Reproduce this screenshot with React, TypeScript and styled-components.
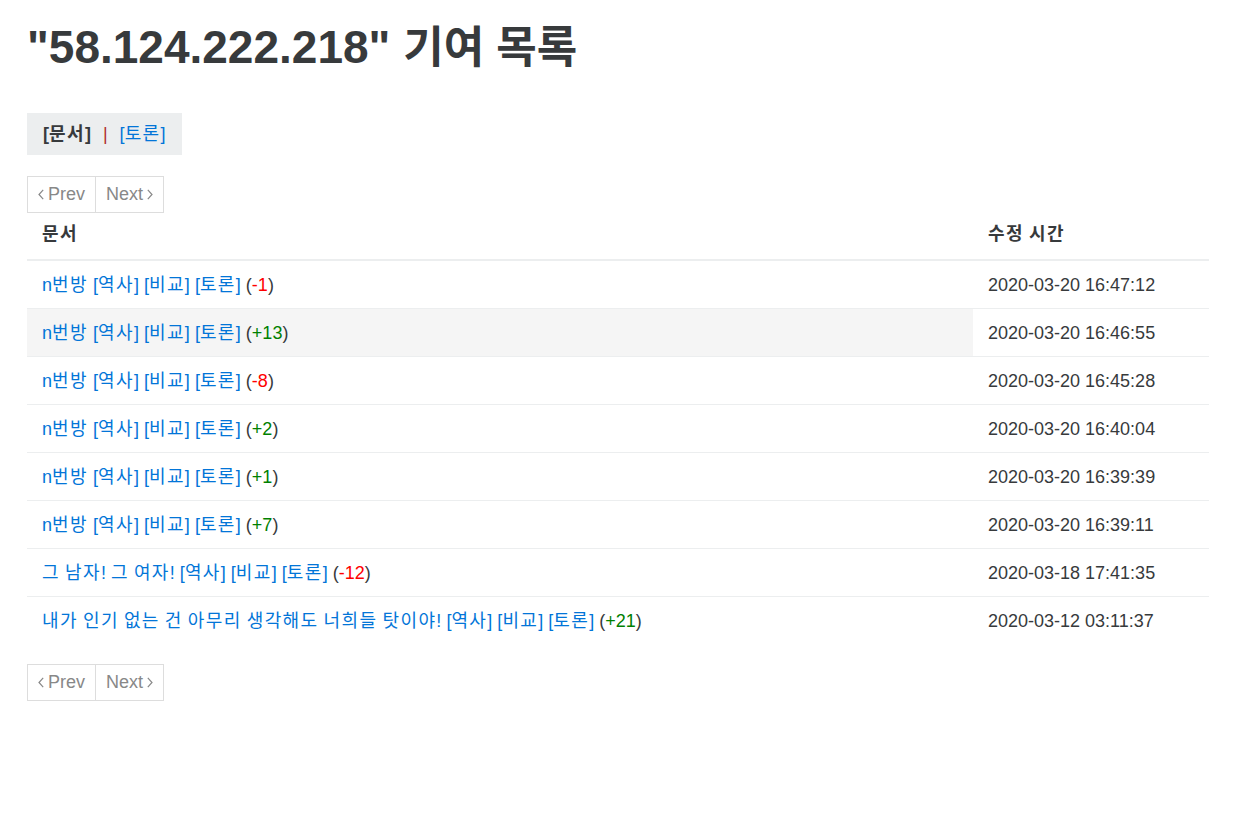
import * as React from 'react';
import styled, { createGlobalStyle } from 'styled-components';

const GlobalStyle = createGlobalStyle`
  body {
    margin: 0;
    background: #fff;
    color: #373a3c;
    font-family: "Liberation Sans", Arial, "Noto Sans CJK KR", sans-serif;
    font-size: 18px;
  }
`;

const Page = styled.div`
  padding: 0 28px 40px 27px;
`;

const Title = styled.h1`
  margin: 17px 0 0;
  font-size: 46px;
  line-height: 60px;
  font-weight: 700;
  color: #373a3c;
`;

const TitleSuffix = styled.span`
  font-size: 44px;
`;

const Hangul = styled.span`
  letter-spacing: 1.4px;
`;

const TabBox = styled.div`
  display: inline-flex;
  align-items: center;
  gap: 12px;
  height: 42px;
  margin-top: 35px;
  padding: 0 16px;
  background: #eceeef;
  font-size: 18px;
  line-height: 22px;
`;

const Current = styled.strong`
  color: #373a3c;
`;

const Sep = styled.span`
  color: #b02a2a;
`;

const Link = styled.a`
  color: #0275d8;
  text-decoration: none;
  cursor: pointer;
`;

const Pager = styled.div<{ $top: number }>`
  display: flex;
  margin-top: ${(p) => p.$top}px;
`;

const PageButton = styled.span`
  display: flex;
  align-items: center;
  gap: 4px;
  height: 37px;
  box-sizing: border-box;
  padding: 0 10px;
  border: 1px solid #ddd;
  color: #888;
  font-size: 18px;

  & + & {
    border-left: none;
  }

  svg {
    width: 6px;
    height: 11px;
  }
`;

const Table = styled.table`
  width: 100%;
  border-collapse: collapse;
  line-height: 22px;
`;

const HeadCell = styled.th`
  box-sizing: border-box;
  height: 47px;
  padding: 0 15px 4px;
  text-align: left;
  vertical-align: middle;
  font-weight: 700;
  font-size: 18px;
  border-bottom: 2px solid #eceeef;
`;

const Row = styled.tr`
  & + & td {
    border-top: 1px solid #eceeef;
  }
`;

const Cell = styled.td<{ $hover?: boolean }>`
  height: 47px;
  padding: 0 15px;
  vertical-align: middle;
  background: ${(p) => (p.$hover ? '#f5f5f5' : 'transparent')};
`;

const TimeCell = styled(Cell)`
  width: 206px;
`;

const Diff = styled.span<{ $up: boolean }>`
  color: ${(p) => (p.$up ? '#008000' : '#ff0000')};
`;

// widen hangul runs a little so they take the same room as in the original page
function Ko({ children }: { children: string }) {
  const parts = children.split(/([\uac00-\ud7a3]+)/);
  return (
    <>
      {parts.map((part, i) =>
        i % 2 === 1 ? <Hangul key={i}>{part}</Hangul> : <React.Fragment key={i}>{part}</React.Fragment>
      )}
    </>
  );
}

const Chevron = ({ dir }: { dir: 'left' | 'right' }) => (
  <svg viewBox="0 0 6 11" fill="none" stroke="currentColor" strokeWidth="1.2">
    {dir === 'left' ? <path d="M5.2 0.8 1 5.5 5.2 10.2" /> : <path d="M0.8 0.8 5 5.5 0.8 10.2" />}
  </svg>
);

function Pagination({ top }: { top: number }) {
  return (
    <Pager $top={top}>
      <PageButton>
        <Chevron dir="left" />
        Prev
      </PageButton>
      <PageButton>
        Next
        <Chevron dir="right" />
      </PageButton>
    </Pager>
  );
}

interface Contribution {
  doc: string;
  diff: number;
  time: string;
}

const rows: Contribution[] = [
  { doc: 'n번방', diff: -1, time: '2020-03-20 16:47:12' },
  { doc: 'n번방', diff: 13, time: '2020-03-20 16:46:55' },
  { doc: 'n번방', diff: -8, time: '2020-03-20 16:45:28' },
  { doc: 'n번방', diff: 2, time: '2020-03-20 16:40:04' },
  { doc: 'n번방', diff: 1, time: '2020-03-20 16:39:39' },
  { doc: 'n번방', diff: 7, time: '2020-03-20 16:39:11' },
  { doc: '그 남자! 그 여자!', diff: -12, time: '2020-03-18 17:41:35' },
  { doc: '내가 인기 없는 건 아무리 생각해도 너희들 탓이야!', diff: 21, time: '2020-03-12 03:11:37' },
];

export default function App() {
  return (
    <Page>
      <GlobalStyle />
      <Title>
        "58.124.222.218" <TitleSuffix>기여 목록</TitleSuffix>
      </Title>
      <TabBox>
        <Current>
          <Ko>[문서]</Ko>
        </Current>
        <Sep>|</Sep>
        <Link>
          <Ko>[토론]</Ko>
        </Link>
      </TabBox>
      <Pagination top={21} />
      <Table>
        <thead>
          <tr>
            <HeadCell>
              <Ko>문서</Ko>
            </HeadCell>
            <HeadCell>
              <Ko>수정 시간</Ko>
            </HeadCell>
          </tr>
        </thead>
        <tbody>
          {rows.map((row, i) => (
            <Row key={i}>
              <Cell $hover={i === 1}>
                <Link>
                  <Ko>{row.doc}</Ko>
                </Link>{' '}
                <Link>
                  <Ko>[역사]</Ko>
                </Link>{' '}
                <Link>
                  <Ko>[비교]</Ko>
                </Link>{' '}
                <Link>
                  <Ko>[토론]</Ko>
                </Link>{' '}
                (<Diff $up={row.diff > 0}>{row.diff > 0 ? `+${row.diff}` : row.diff}</Diff>)
              </Cell>
              <TimeCell>{row.time}</TimeCell>
            </Row>
          ))}
        </tbody>
      </Table>
      <Pagination top={20} />
    </Page>
  );
}
